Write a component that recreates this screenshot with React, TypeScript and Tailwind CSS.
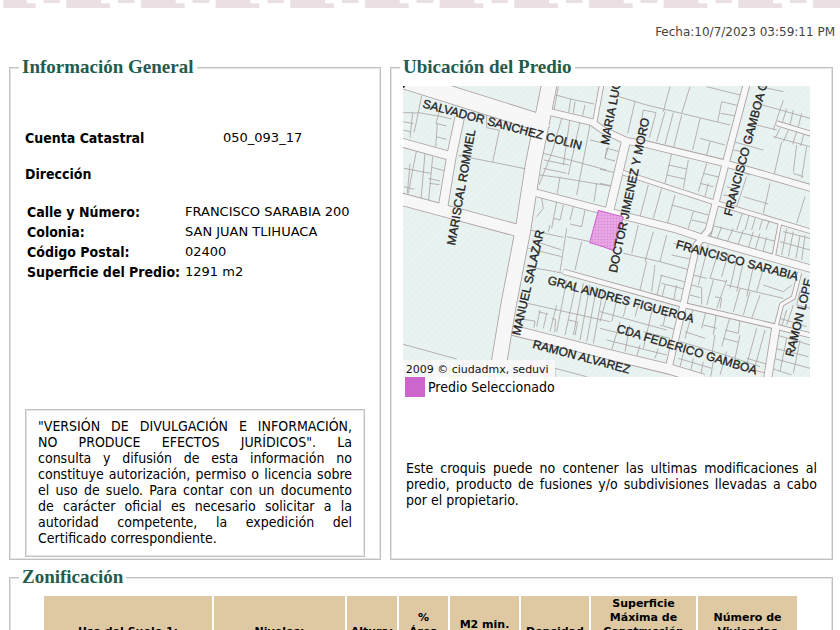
import React from 'react';

interface Calle {
  d: string;
  ancho: number;
}

interface Rotulo {
  texto: string;
  x: number;
  y: number;
  giro: number;
}

const calles: Calle[] = [
  { d: 'M-10 -22L410 110L428 100', ancho: 50 },
  { d: 'M440 78L566 108L600 132L671 165L731 175L966 232L1230 308', ancho: 18 },
  { d: 'M440 -10L391 232L359 437L316 660L278 890', ancho: 44 },
  { d: 'M170 95L146 207L118 375', ancho: 26 },
  { d: 'M-10 168L146 211', ancho: 24 },
  { d: 'M-10 338L350 435', ancho: 34 },
  { d: 'M398 320L610 376L821 430L901 457L1230 550', ancho: 20 },
  { d: 'M597 -10L575 110', ancho: 11 },
  { d: 'M669 165L619 375', ancho: 24 },
  { d: 'M660 260L936 350L1230 438', ancho: 12 },
  { d: 'M1032 -10L966 240L917 432L881 477L841 657L796 850', ancho: 18 },
  { d: 'M1122 112L1230 145', ancho: 12 },
  { d: 'M481 557L841 657L1111 720L1230 750', ancho: 13 },
  { d: 'M330 733L611 804L801 850L901 880', ancho: 28 },
  { d: 'M1119 722L1092 890', ancho: 22 },
  { d: 'M1190 560L1171 635L1136 655L1119 722', ancho: 10 },
  { d: 'M1132 405L1112 512', ancho: 8 },
];

// lotes agrupados por cuadrante del croquis
const lotesNO =
  'M10 98h28l12 2M65 47l-15 75l-8 35M50 97l70 12l35 8M120 85l-12 45l32 8M112 130l-5 70M108 170l32 8M10 125l30 6M10 150l22 6M38 98l-8 75M260 105v38l38 8l-20 95M175 226l205 41M50 210l-15 75l-10 55M75 220l-12 140M98 230l-12 130M12 265l80 15M30 250l-8 90M95 262l38 10M85 295l35 8M12 320l30 8M88 310l30 4M475 20l-15 80M467 45l45 12l-6 40M512 57l70 15M525 65l-5 35M555 75l-8 35M485 115l-30 105l-38 95M510 115l-20 140M540 125l-35 160M570 135l-40 210M430 220l80 20l110 30M432 240l75 15M420 285l60 8l150 25M480 290l-8 50M430 265l70 15M590 310l-8 55M570 180l60 14M625 200l-10 35M425 355l5 30l-20 25M470 365l-15 80M490 375l-10 45l-20 -5M520 380l-10 40M555 390l-10 50l-35 -8';
const lotesNE =
  'M210 20l-20 75M270 20l-25 80M40 45l100 30l250 60M320 20l100 25M105 65l-22 95M130 90l38 8l-20 75M130 90l-12 70M195 95l-25 90M220 98l-25 95M245 105l-25 100M300 115l-22 95M300 175l75 20M330 185l-10 40M365 65l50 12M365 65l-12 60M362 100l45 8M480 20l70 15M550 60l-30 90M470 70l160 45M450 130l80 20M560 85l-12 40M580 90l-10 45M605 100l-10 40M540 145l-15 30M565 150l-15 35M590 155l-12 38M612 160l-10 38M520 170l110 30M545 185l-25 110M590 195l-10 80M620 200l-15 95M580 280l30 10M400 185l90 25M400 210l25 5M215 220l-20 90M205 255l55 12M200 285l55 12M265 240l-15 85M320 250l-25 85M310 280l50 12M300 310l40 10M325 310l-10 40M20 205l40 10M20 205l-5 30l30 8M0 268l45 10M0 310l35 8M145 315l-25 95M185 325l-25 90M225 345l-25 95M215 375l110 30M280 395l-15 50M275 420l45 10M440 290l-30 90M430 350l75 22M510 310l-20 90M615 350l-25 80M400 265l50 20M380 320l30 10M370 345l30 5M430 390l-20 60M450 395l-15 55M470 400l-15 50M490 410l-12 40M510 415l-12 35M545 425l-8 25';
const lotesSO =
  'M10 358l160 44M390 15l100 22M395 45l90 30M385 70l100 25M500 10l-20 130M545 50l-20 85M500 35l70 15M380 125l70 12l50 10M450 0l-5 20M360 230l270 60M350 280l55 8l-3 20M420 255l-10 50M440 265l-10 45M470 240l-20 80M500 165l-30 155M530 170l-35 160M550 175l-30 155M570 180l-30 165M590 185l-30 165M610 190l-30 165M505 285l28 6l-8 40M415 260l30 8M455 280l12 4l-3 38M465 430l95 25M465 430v30';
const lotesSE =
  'M115 0l-20 85M160 20l-25 90M200 30l-20 80M70 85l110 25l90 25M140 110l-20 85M165 120l-10 80M185 150l-15 65M180 150l90 25M185 175l70 18M230 180l-10 50M195 180l-10 40M220 55l70 20M215 90l70 15M325 60l-30 120M355 80l-25 80M385 85l-20 70M410 100l-20 90M430 110l-20 90M460 125l-20 90M490 130l-20 70M330 160l50 10M380 165l-30 85M340 165l-20 75M380 180l170 40M280 150l40 10M275 180l30 8v50M270 210l30 8M420 190l-20 70M450 200l-20 70M480 210l-25 70M345 215l20 5l-5 30M490 180l60 20l25 -20M340 5l-8 30M365 5l-15 40M400 10l-20 45M430 15l-18 50M460 20l-15 50M480 25l-15 50M500 35l-12 50M330 0l200 50M560 10l-15 80M580 20l-15 75M600 30l-12 70M540 50l90 25M615 30l-10 75M550 20l80 20M320 250l-15 60M350 260l-10 70M310 300l40 10M390 275l-25 90M385 275l35 10l-5 40l-40 -10M370 340l45 12M420 330l-15 70M470 310l-30 110M495 315l-30 110M280 250l-25 90M255 320l60 20M345 330l-10 60M380 380l-20 70M440 400l70 20M440 430l60 15M0 260l200 55M25 200l-25 90M55 205l-20 85M85 215l-15 60M120 225l-15 50M160 240l-30 130M200 250l-10 50M60 290l-25 85M90 300l-15 80M0 310l60 15M20 345l180 45M130 320l80 20M180 300l50 15M175 370l-10 30M120 360l-10 35M240 350l120 35l120 40M250 385l-10 40M280 400l-8 40M310 410l-8 40M340 410l-8 45M235 400l100 30M530 330l100 30M525 370l100 25M520 400l110 30M515 430l60 20M560 340l-20 100M600 345l-20 100M560 255l-15 50M540 280l80 25M580 240l-20 60M600 200l-10 40l40 10';

const rotulos: Rotulo[] = [
  { texto: 'SALVADOR SANCHEZ COLIN', x: 57, y: 64, giro: 15 },
  { texto: 'MARISCAL ROMMEL', x: 156, y: 479, giro: -80 },
  { texto: 'MARIA LUC', x: 617, y: 178, giro: -79 },
  { texto: 'DOCTOR JIMENEZ Y MORO', x: 641, y: 562, giro: -78 },
  { texto: 'FRANCISCO GAMBOA G', x: 986, y: 392, giro: -75 },
  { texto: 'MANUEL SALAZAR', x: 351, y: 750, giro: -77 },
  { texto: 'GRAL ANDRES FIGUEROA', x: 432, y: 593, giro: 15 },
  { texto: 'FRANCISCO SARABIA', x: 817, y: 486, giro: 15 },
  { texto: 'CDA FEDERICO GAMBOA', x: 639, y: 738, giro: 17 },
  { texto: 'RAMON ALVAREZ', x: 387, y: 785, giro: 15 },
  { texto: 'RAMON LOPE', x: 1171, y: 814, giro: -76 },
];

const direccion = [
  { campo: 'Calle y Número:', valor: 'FRANCISCO SARABIA 200' },
  { campo: 'Colonia:', valor: 'SAN JUAN TLIHUACA' },
  { campo: 'Código Postal:', valor: '02400' },
  { campo: 'Superficie del Predio:', valor: '1291 m2' },
];

const leyenda = [
  '"VERSIÓN DE DIVULGACIÓN E INFORMACIÓN,',
  'NO PRODUCE EFECTOS JURÍDICOS". La',
  'consulta y difusión de esta información no',
  'constituye autorización, permiso o licencia sobre',
  'el uso de suelo. Para contar con un documento',
  'de carácter oficial es necesario solicitar a la',
  'autoridad competente, la expedición del',
  'Certificado correspondiente.',
];

const columnas = [
  { titulo: ['Uso del Suelo 1:'], ancho: 'w-[168px]' },
  { titulo: ['Niveles:'], ancho: 'w-[131px]' },
  { titulo: ['Altura:'], ancho: 'w-[50px]' },
  { titulo: ['%', 'Área', 'Libre'], ancho: 'w-[49px]' },
  { titulo: ['M2 min.', 'Vivienda:'], ancho: 'w-[69px]' },
  { titulo: ['Densidad'], ancho: 'w-[68px]' },
  { titulo: ['Superficie', 'Máxima de', 'Construcción', '(Sin', 'restricciones)'], ancho: 'w-[105px]' },
  { titulo: ['Número de', 'Viviendas', 'Permitidas'], ancho: 'w-[99px]' },
];

function Greca() {
  return (
    <svg className="block w-full h-2" viewBox="0 0 2520 24" preserveAspectRatio="xMinYMin slice" aria-hidden="true">
      <defs>
        <pattern id="greca" x="130" width="224" height="24" patternUnits="userSpaceOnUse">
          <path d="M0 0h50v9H0zM69 0h104v10h27v14H69z" fill="#eae0e4" />
        </pattern>
      </defs>
      <path d="M10 0h70v10h27v14H10z" fill="#eae0e4" />
      <rect x="130" width="2390" height="24" fill="url(#greca)" />
    </svg>
  );
}

function Croquis() {
  return (
    <svg
      className="block w-[407px] max-w-full"
      viewBox="0 0 1221 873"
      role="img"
      aria-label="Croquis de ubicación"
    >
      <defs>
        <pattern id="trama" width="14" height="14" patternUnits="userSpaceOnUse" patternTransform="rotate(45)">
          <rect width="14" height="14" fill="#ebf2f1" />
          <rect width="5" height="14" fill="#e0f2f0" />
        </pattern>
        <pattern id="seleccion" width="9" height="9" patternUnits="userSpaceOnUse">
          <rect width="9" height="9" fill="#e9a9e4" />
          <path d="M0 0h9M0 0v9" stroke="#d98bd9" strokeWidth="3" />
        </pattern>
      </defs>
      <rect width="1221" height="873" fill="url(#trama)" />
      <g fill="none" stroke="#aca3a3" strokeWidth="2.5">
        <path d={lotesNO} transform="translate(-9 -18)" />
        <path d={lotesNE} transform="translate(591 -18)" />
        <path d={lotesSO} transform="translate(-9 417)" />
        <path d={lotesSE} transform="translate(591 417)" />
      </g>
      <g fill="none" stroke="#ab9f9f" strokeLinejoin="round">
        {calles.map((c) => (
          <path key={c.d} d={c.d} strokeWidth={c.ancho + 5} />
        ))}
      </g>
      <g fill="none" stroke="#f7f7f7" strokeLinejoin="round">
        {calles.map((c) => (
          <path key={c.d} d={c.d} strokeWidth={c.ancho} />
        ))}
      </g>
      <path d="M586 373L661 393L632 494L600 482L560 470Z" fill="url(#seleccion)" stroke="#cf5fd0" strokeWidth="3" />
      <g fontFamily="'Liberation Sans', Arial, sans-serif" fontSize="36" fill="#222" stroke="#222" strokeWidth="1">
        {rotulos.map((r) => (
          <text key={r.texto} transform={`translate(${r.x} ${r.y}) rotate(${r.giro})`}>{r.texto}</text>
        ))}
      </g>
      <rect y="822" width="456" height="51" fill="#f7f7f7" />
      <text x="8" y="861" fontFamily="'DejaVu Sans', Verdana, sans-serif" fontSize="33" fill="#111">2009 © ciudadmx, seduvi</text>
      <rect width="5" height="5" fill="#111" />
    </svg>
  );
}

interface SeccionProps {
  titulo: string;
  className: string;
  children: React.ReactNode;
}

function Seccion({ titulo, className, children }: SeccionProps) {
  return (
    <fieldset className={`border border-[#c0c0c0] px-[9px] shadow-[inset_0_0_0_1px_#e6e6e6] ${className}`}>
      <legend className="bg-white px-[3px] font-['Liberation_Serif',serif] text-[19px] leading-[22px] font-bold text-[#235b4e]">
        {titulo}
      </legend>
      {children}
    </fieldset>
  );
}

export default function App() {
  return (
    <div className="h-screen overflow-hidden bg-white font-['DejaVu_Sans_Condensed','DejaVu_Sans',sans-serif] text-sm text-black">
      <Greca />
      <p className="pt-4 pr-[5px] text-right font-['DejaVu_Sans',sans-serif] text-xs leading-4 text-[#444]">Fecha:10/7/2023 03:59:11 PM</p>

      <main className="pt-4 pl-[9px] pr-[7px]">
        <div className="flex gap-[9px]">
          <Seccion titulo="Información General" className="flex w-[372px] shrink-0 flex-col pb-0.5">
            <div className="flex flex-1 flex-col px-1.5">
              <dl className="flex pt-[50px] leading-5">
                <dt className="w-[198px] font-bold">Cuenta Catastral</dt>
                <dd className="font-['DejaVu_Sans',sans-serif] text-[13px]">050_093_17</dd>
              </dl>
              <h2 className="pt-4 leading-5 font-bold">Dirección</h2>
              <table className="mt-[18px] ml-0.5 self-start text-left leading-5">
                <tbody>
                  {direccion.map((d) => (
                    <tr key={d.campo}>
                      <th scope="row" className="w-[158px] font-bold whitespace-nowrap">{d.campo}</th>
                      <td className="font-['DejaVu_Sans',sans-serif] text-[13px] whitespace-nowrap">{d.valor}</td>
                    </tr>
                  ))}
                </tbody>
              </table>
              <p className="mt-auto border border-[#c0c0c0] px-3 pt-2 pb-[10px] leading-4 shadow-[inset_0_0_0_1px_#e6e6e6]">
                {leyenda.map((linea) => (
                  <span key={linea} className="block text-justify [text-align-last:justify] last:[text-align-last:left]">{linea}</span>
                ))}
              </p>
            </div>
          </Seccion>

          <Seccion titulo="Ubicación del Predio" className="min-w-0 flex-1 pb-[51px]">
            <div className="px-[3px] pt-2">
              <Croquis />
              <div className="flex items-center gap-[3px] pl-0.5">
                <span className="h-5 w-5 bg-[#cc66cc]" />
                <span className="leading-5">Predio Seleccionado</span>
              </div>
              <p className="px-[3px] pt-[63px] text-justify leading-4">
                Este croquis puede no contener las ultimas modificaciones al predio, producto de fusiones y/o
                subdivisiones llevadas a cabo por el propietario.
              </p>
            </div>
          </Seccion>
        </div>

        <Seccion titulo="Zonificación" className="mt-1.5 pb-4">
          <div className="pt-2 pr-6 pl-[23px]">
            <table className="w-full table-fixed border-separate border-spacing-x-0.5 border-spacing-y-0 font-['DejaVu_Sans',sans-serif] text-[11px] leading-[14px]">
              <thead>
                <tr>
                  {columnas.map((c) => (
                    <th key={c.titulo[0]} scope="col" className={`${c.ancho} bg-[#dec9a2] py-px text-center align-middle font-bold`}>
                      {c.titulo.map((linea) => (
                        <span key={linea} className="block whitespace-nowrap">{linea}</span>
                      ))}
                    </th>
                  ))}
                </tr>
              </thead>
            </table>
          </div>
        </Seccion>
      </main>
    </div>
  );
}
